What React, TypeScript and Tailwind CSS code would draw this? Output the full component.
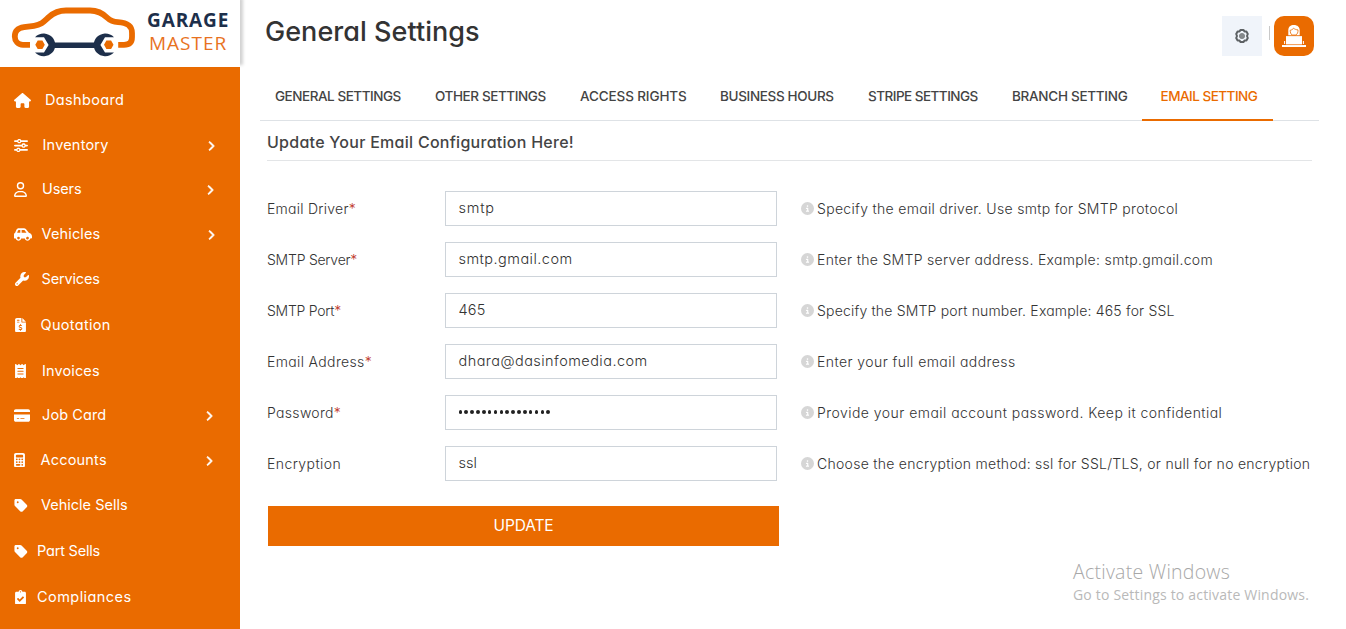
import type { ReactNode } from "react";
import {
  FaHouse,
  FaSliders,
  FaRegUser,
  FaCarSide,
  FaWrench,
  FaFileInvoiceDollar,
  FaReceipt,
  FaCreditCard,
  FaCalculator,
  FaTag,
  FaChevronRight,
  FaCircleInfo,
} from "react-icons/fa6";
import { FaClipboardCheck } from "react-icons/fa";

type NavItem = {
  label: string;
  icon: ReactNode;
  row: string;
  text: string;
  arrow?: string;
};

const navItems: NavItem[] = [
  { label: "Dashboard", icon: <FaHouse className="h-[15px] w-[17px]" />, row: "mt-0", text: "pl-[31px] tracking-[0.36px]" },
  { label: "Inventory", icon: <FaSliders className="h-[15px] w-[14px]" />, row: "mt-px", text: "pl-[28.5px] tracking-[0.2px]", arrow: "mr-[25px]" },
  { label: "Users", icon: <FaRegUser className="h-[15px] w-[13px]" />, row: "mt-0", text: "pl-[28px] tracking-[-0.1px]", arrow: "mr-[26px]" },
  { label: "Vehicles", icon: <FaCarSide className="h-[15px] w-[18px]" />, row: "mt-px", text: "pl-[27.5px] tracking-[0.15px]", arrow: "mr-[25.5px]" },
  { label: "Services", icon: <FaWrench className="ml-px h-[14px] w-[14px]" />, row: "mt-px", text: "pl-[27.5px] tracking-[-0.16px]" },
  { label: "Quotation", icon: <FaFileInvoiceDollar className="ml-px h-[14.5px] w-[11px]" />, row: "mt-[2px]", text: "pl-[26.5px] tracking-[0.32px]" },
  { label: "Invoices", icon: <FaReceipt className="ml-px h-[14.5px] w-[11px]" />, row: "mt-[2px]", text: "pl-[28px] tracking-[0.12px]" },
  { label: "Job Card", icon: <FaCreditCard className="h-[15px] w-[16px]" />, row: "mt-0", text: "pl-[28px] tracking-[0.1px]", arrow: "mr-[27px]" },
  { label: "Accounts", icon: <FaCalculator className="h-[14.5px] w-[11px]" />, row: "mt-px", text: "pl-[26.5px] tracking-[0.2px]", arrow: "mr-[27px]" },
  { label: "Vehicle Sells", icon: <FaTag className="h-[15px] w-[14px]" />, row: "mt-px", text: "pl-[27px] tracking-[0px]" },
  { label: "Part Sells", icon: <FaTag className="h-[15px] w-[14px]" />, row: "mt-[2px]", text: "pl-[23px] tracking-[-0.2px]" },
  { label: "Compliances", icon: <FaClipboardCheck className="ml-px h-[14.5px] w-[11px]" />, row: "mt-[2px]", text: "pl-[23px] tracking-[0.44px]" },
];

const tabs = [
  { label: "GENERAL SETTINGS", cls: "w-[160px] tracking-[-0.47px]" },
  { label: "OTHER SETTINGS", cls: "w-[145px] tracking-[-0.4px]" },
  { label: "ACCESS RIGHTS", cls: "w-[140px] tracking-[-0.12px]" },
  { label: "BUSINESS HOURS", cls: "w-[148px] tracking-[-0.34px]" },
  { label: "STRIPE SETTINGS", cls: "w-[144px] tracking-[-0.52px]" },
  { label: "BRANCH SETTING", cls: "w-[145px] tracking-[-0.28px]" },
];

const fields = [
  { label: "Email Driver", ls: "tracking-[0.26px]", required: true, value: "smtp", vls: "tracking-[0.8px]", hint: "Specify the email driver. Use smtp for SMTP protocol", hls: "tracking-[0.31px]" },
  { label: "SMTP Server", ls: "tracking-[-0.24px]", required: true, value: "smtp.gmail.com", vls: "tracking-[0.46px]", hint: "Enter the SMTP server address. Example: smtp.gmail.com", hls: "tracking-[0.32px]" },
  { label: "SMTP Port", ls: "tracking-[-0.25px]", required: true, value: "465", vls: "tracking-[0.2px]", hint: "Specify the SMTP port number. Example: 465 for SSL", hls: "tracking-[0.18px]" },
  { label: "Email Address", ls: "tracking-[0.36px]", required: true, value: "dhara@dasinfomedia.com", vls: "tracking-[0.45px]", hint: "Enter your full email address", hls: "tracking-[0.43px]" },
  { label: "Password", ls: "tracking-[0.32px]", required: true, value: "", vls: "", hint: "Provide your email account password. Keep it confidential", hls: "tracking-[0.46px]" },
  { label: "Encryption", ls: "tracking-[0.42px]", required: false, value: "ssl", vls: "tracking-[0px]", hint: "Choose the encryption method: ssl for SSL/TLS, or null for no encryption", hls: "tracking-[0.28px]" },
];

function CarLogo() {
  return (
    <svg width="124" height="52" viewBox="11 6 124 52" fill="none" className="shrink-0">
      <path
        d="M30 44.8H23C18 44.8 14.8 41 14.8 36.5C14.8 31 17.5 28.2 24 27.2L34 25.8C42 24.5 44 21.5 49 17C54 12.5 59 10.5 66 10.5H90C98 10.5 103 13.5 107.5 18C110.5 21 112.5 21.8 118 22.1C127 22.6 132 25.5 132 33V37C132 42.5 129.5 44.8 124 44.8H118.2"
        stroke="#ea6b00"
        strokeWidth="5.8"
      />
      <path d="M52 45.3H98" stroke="#1d2f4b" strokeWidth="5.6" />
      <path d="M35 37.2C37.5 34.4 41 33.3 44.3 33.5C50.5 34 55.3 38.8 55.3 45C55.3 51.2 50.5 55.8 44.3 56.2C41 56.4 37.5 55.2 35 52.6H44L48.6 45L44 37.2Z" fill="#1d2f4b" />
      <path d="M114 37.2C111.5 34.4 108 33.3 104.7 33.5C98.5 34 93.7 38.8 93.7 45C93.7 51.2 98.5 55.8 104.7 56.2C108 56.4 111.5 55.2 114 52.6H105L100.4 45L105 37.2Z" fill="#1d2f4b" />
      <path d="M37.7 40.5H42.4L44.8 44.8L42.4 49H37.7L35.3 44.8Z M106.4 40.5H111.1L113.5 44.8L111.1 49H106.4L104 44.8Z" fill="#ea6b00" />
    </svg>
  );
}

function GearIcon() {
  return (
    <svg width="16" height="16" viewBox="0 0 16 16" fill="none">
      <path
        d="M6.6 1.9H9.4L10.5 3.4L12.4 3.5L13.8 6L13 8L13.8 10L12.4 12.5L10.5 12.6L9.4 14.1H6.6L5.5 12.6L3.6 12.5L2.2 10L3 8L2.2 6L3.6 3.500L5.500 3.400Z"
        stroke="#5d6164"
        strokeWidth="2"
        strokeLinejoin="round"
      />
      <circle cx="8" cy="8" r="2.6" fill="#85898c" stroke="#777b7e" strokeWidth="0.8" />
    </svg>
  );
}

function AvatarIcon() {
  return (
    <svg width="24" height="24" viewBox="0 0 24 24">
      <path d="M6.3 11.4V6.2C6.3 2.9 8.6 1 11.9 1C15.5 1 17.7 3.1 17.7 6.4V11.4Z" fill="#fff" />
      <path d="M8.2 6.3C9.8 5.9 11 5.2 11.6 4.2C12.8 5.3 14.2 5.7 16 5.9C16.2 8.3 15.3 10 14 11H10C8.800 10 8.200 8.400 8.200 6.300Z" fill="#fff" stroke="#ea6b00" strokeWidth="0.8" />
      <path d="M4 12H20V20.700H4Z" fill="#fff" />
      <path d="M4 11.700H20" stroke="#ea6b00" strokeWidth=".6" />
      <path d="M2.600 17V20M21.400 17V20" stroke="#fff" strokeWidth="1" />
      <path d="M0 21H24V23H0Z" fill="#fff" />
      <path d="M2 20.600H22" stroke="#ea6b00" strokeWidth=".5" />
    </svg>
  );
}

function Sidebar() {
  return (
    <aside className="flex w-[240px] shrink-0 flex-col bg-[#ea6b00]">
      <div className="flex h-[67px] shrink-0 bg-white pl-[11px] pt-[6px] shadow-[3px_-2px_3px_rgba(0,0,0,0.18)]">
        <CarLogo />
        <div className="ml-[12px] pt-[2.5px] font-['Open_Sans'] text-[19px] leading-[23px]">
          <div className="font-bold tracking-[0.9px] text-[#1d2f4b]">GARAGE</div>
          <div className="pl-[2px] tracking-[1px] text-[#e8721f]">MASTER</div>
        </div>
      </div>
      <nav className="flex flex-col pt-[11px] text-white">
        {navItems.map((item) => (
          <a key={item.label} className={`flex h-[44px] items-center pl-[14px] ${item.row}`}>
            <span className="flex w-0 shrink-0">
              <span className="shrink-0">{item.icon}</span>
            </span>
            <span className={`flex-1 whitespace-nowrap text-[14.5px] leading-5 ${item.text}`}>{item.label}</span>
            {item.arrow && <FaChevronRight className={`mt-[2px] h-[10px] w-[8px] overflow-visible stroke-white stroke-[45px] ${item.arrow}`} />}
          </a>
        ))}
      </nav>
    </aside>
  );
}

export default function App() {
  return (
    <div className="relative flex h-[629px] w-full overflow-hidden bg-white font-['Inter','Noto_Sans',sans-serif] text-[#333] [font-feature-settings:'cv11']">
      <Sidebar />
      <main className="flex min-w-0 flex-1 flex-col pl-[20px]">
        <header className="flex h-[72px] items-start justify-between pl-[5px] pr-[32px]">
          <h1 className="pt-[14px] text-[27px] font-medium leading-9 tracking-[0.04px]">General Settings</h1>
          <div className="flex items-center pt-[16px]">
            <button className="flex h-[40px] w-[40px] items-center justify-center bg-[#f0f4fa]">
              <GearIcon />
            </button>
            <span className="mb-[6px] ml-[7px] h-[14px] w-px bg-[#c9c9c9]" />
            <button className="ml-[4px] flex h-[40px] w-[40px] items-center justify-center rounded-[10px] bg-[#ea6b00]">
              <AvatarIcon />
            </button>
          </div>
        </header>

        <div className="mr-[27px] flex h-[49px] border-b border-[#dee2e6] pl-[15px] text-[13.5px] font-medium leading-[49px] text-[#444]">
          {tabs.map((tab) => (
            <a key={tab.label} className={`shrink-0 whitespace-nowrap ${tab.cls}`}>
              {tab.label}
            </a>
          ))}
          <a className="-mb-px -ml-[15px] h-[49px] w-[131px] shrink-0 whitespace-nowrap border-b-2 border-[#ea6b00] pl-[18.5px] tracking-[-0.5px] text-[#ea6b00]">
            EMAIL SETTING
          </a>
        </div>

        <h2 className="ml-[7px] mr-[34px] h-[40px] border-b border-[#e3e5e7] text-[16px] font-medium leading-[43px] tracking-[0.27px] text-[#444]">
          Update Your Email Configuration Here!
        </h2>

        <form className="ml-[7px] mt-[30px] flex flex-col gap-4 text-[14px] text-[#333]">
          {fields.map((f) => (
            <div key={f.label} className="flex h-[35px] items-center">
              <label className={`w-[178px] shrink-0 whitespace-nowrap font-light leading-5 ${f.ls}`}>
                {f.label}
                {f.required && <span className="text-[#c0392b]">*</span>}
              </label>
              <div className="flex h-[35px] w-[332px] shrink-0 items-center border border-[#ced4da] pl-[12.5px]">
                {f.value ? (
                  <span className={`-mt-px text-[14.5px] font-light leading-5 ${f.vls}`}>{f.value}</span>
                ) : (
                  <span className="mb-px flex gap-[2.27px]">
                    {Array.from({ length: 16 }, (_, i) => (
                      <span key={i} className="h-[3.6px] w-[3.6px] rounded-full bg-[#222]" />
                    ))}
                  </span>
                )}
              </div>
              <FaCircleInfo className="ml-[24px] h-[13px] w-[13px] shrink-0 text-[#d6d6d6]" />
              <span className={`ml-[3px] whitespace-nowrap font-light leading-5 ${f.hls}`}>{f.hint}</span>
            </div>
          ))}
        </form>

        <button className="ml-[8px] mt-[25px] h-[40px] w-[511px] bg-[#ea6b00] text-[15.5px] leading-[38px] tracking-[-0.15px] text-white">UPDATE</button>
      </main>

      <div className="absolute left-[1073px] top-[558px] whitespace-nowrap font-['Open_Sans'] text-[#b9b9b9]">
        <div className="text-[19.5px] font-light leading-[27px] tracking-[0.25px] text-[#a8a8a8]">Activate Windows</div>
        <div className="pt-px text-[14px] leading-[18px] tracking-[0.19px]">Go to Settings to activate Windows.</div>
      </div>
    </div>
  );
}
